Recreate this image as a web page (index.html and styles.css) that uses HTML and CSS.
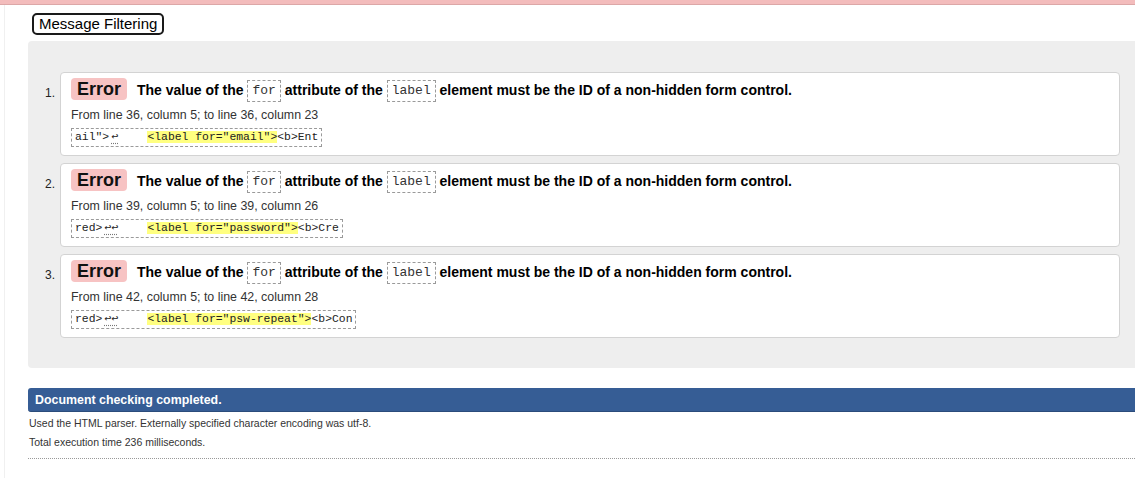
FILE: index.html
```html
<!DOCTYPE html>
<html lang="en">
<head>
<meta charset="utf-8">
<title>Validator results</title>
<link rel="stylesheet" href="styles.css">
</head>
<body>
<div class="topbar"></div>
<div class="page">
  <button class="filter-btn" type="button">Message Filtering</button>
  <div class="results">
    <ol class="msgs">
      <li class="msg">
        <span class="num">1.</span>
        <div class="card">
          <p class="title"><strong class="badge">Error</strong><span class="text">The value of the <code>for</code> attribute of the <code>label</code> element must be the ID of a non-hidden form control.</span></p>
          <p class="loc">From line 36, column 5; to line 36, column 23</p>
          <p class="extract"><code>ail"&gt;<span class="lf">↩</span>    <mark>&lt;label for="email"&gt;</mark>&lt;b&gt;Ent</code></p>
        </div>
      </li>
      <li class="msg">
        <span class="num">2.</span>
        <div class="card">
          <p class="title"><strong class="badge">Error</strong><span class="text">The value of the <code>for</code> attribute of the <code>label</code> element must be the ID of a non-hidden form control.</span></p>
          <p class="loc">From line 39, column 5; to line 39, column 26</p>
          <p class="extract"><code>red&gt;<span class="lf">↩↩</span>    <mark>&lt;label for="password"&gt;</mark>&lt;b&gt;Cre</code></p>
        </div>
      </li>
      <li class="msg">
        <span class="num">3.</span>
        <div class="card">
          <p class="title"><strong class="badge">Error</strong><span class="text">The value of the <code>for</code> attribute of the <code>label</code> element must be the ID of a non-hidden form control.</span></p>
          <p class="loc">From line 42, column 5; to line 42, column 28</p>
          <p class="extract"><code>red&gt;<span class="lf">↩↩</span>    <mark>&lt;label for="psw-repeat"&gt;</mark>&lt;b&gt;Con</code></p>
        </div>
      </li>
    </ol>
  </div>
  <div class="done">Document checking completed.</div>
  <p class="info first">Used the HTML parser. Externally specified character encoding was utf-8.</p>
  <p class="info">Total execution time 236 milliseconds.</p>
  <hr class="dotted">
</div>
</body>
</html>
```
FILE: styles.css
```css
html, body {
  margin: 0;
  padding: 0;
  background: #fff;
}
body {
  font-family: "Liberation Sans", Arial, sans-serif;
  color: #000;
}
.topbar {
  height: 4px;
  background: #f3bcbc;
  border-bottom: 1px solid #dca7a7;
}
.page {
  margin-left: 4px;
  border-left: 1px solid #f0f0f0;
  padding-left: 23px;
  padding-top: 8px;
  min-height: 473px;
  box-sizing: border-box;
}
.filter-btn {
  display: block;
  margin: 0 0 6px 4px;
  height: 22px;
  padding: 0 5px;
  border: 2px solid #1a1a1a;
  border-radius: 5px;
  background: #fff;
  font-family: "Liberation Sans", Arial, sans-serif;
  font-size: 15px;
  line-height: 18px;
  color: #000;
}
.results {
  background: #eeeeee;
  border-radius: 4px 0 0 4px;
  padding: 31px 15px 30px 0;
}
.msgs {
  list-style: none;
  margin: 0;
  padding: 0;
  display: flex;
  flex-direction: column;
  gap: 7px;
}
.msg {
  display: grid;
  grid-template-columns: 32px 1fr;
}
.num {
  text-align: right;
  padding-right: 5px;
  padding-top: 13px;
  font-size: 12px;
  line-height: 16px;
  color: #222;
}
.card {
  background: #fff;
  border: 1px solid #d3d3d3;
  border-radius: 4px;
  padding: 5px 10px 8px 10px;
}
.card p {
  margin: 0;
}
.title {
  display: flex;
  align-items: center;
  height: 22px;
}
.badge {
  display: inline-block;
  background: #f7c3c3;
  border-radius: 4px;
  padding: 0 6px;
  font-size: 18px;
  line-height: 22px;
  font-weight: bold;
  color: #111;
  margin-right: 10px;
}
.text {
  font-size: 14px;
  font-weight: bold;
  line-height: 22px;
  color: #000;
  padding-top: 3px;
}
.text code {
  display: inline-block;
  font-family: "Liberation Mono", "DejaVu Sans Mono", monospace;
  font-weight: normal;
  font-size: 13px;
  line-height: 20px;
  padding: 0 4px;
  border: 1px dashed #9a9a9a;
  color: #333;
  vertical-align: middle;
}
.loc {
  margin-top: 7px !important;
  font-size: 12.4px;
  line-height: 16px;
  color: #333;
}
.extract {
  margin-top: 5px !important;
  display: flex;
  height: 19px;
}
.extract code {
  display: block;
  box-sizing: border-box;
  height: 19px;
  white-space: pre;
  font-family: "Liberation Mono", "DejaVu Sans Mono", monospace;
  font-size: 11.4px;
  line-height: 17px;
  padding: 0 3px;
  border: 1px dashed #9a9a9a;
  color: #222;
}
.lf {
  padding: 0 2px;
  text-decoration: underline dotted #777;
  text-underline-offset: 3px;
}
mark {
  background: #ffff80;
  color: #222;
}
.done {
  margin-top: 20px;
  height: 24px;
  line-height: 24px;
  background: #365d95;
  border-bottom: 1px solid #2b4c7b;
  box-sizing: border-box;
  border-radius: 3px 0 0 3px;
  padding-left: 7px;
  color: #fff;
  font-weight: bold;
  font-size: 12.4px;
}
.info {
  margin: 0;
  padding-left: 1px;
  font-size: 10.5px;
  line-height: 19px;
  color: #333;
}
.info.first {
  margin-top: 2px;
}
.dotted {
  margin: 6px 0 0 0;
  border: 0;
  border-top: 1px dotted #999;
  height: 0;
}
```
